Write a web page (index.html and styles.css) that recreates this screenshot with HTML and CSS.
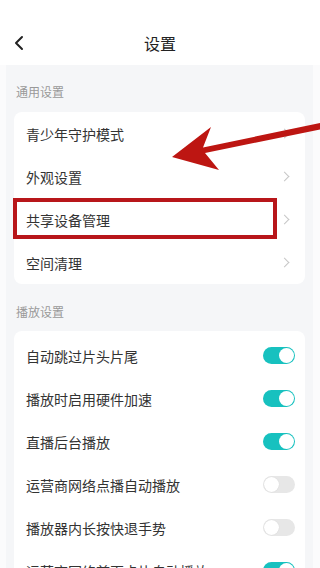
FILE: index.html
```html
<!DOCTYPE html>
<html lang="zh">
<head>
<meta charset="utf-8">
<link rel="stylesheet" href="styles.css">
</head>
<body>
<div class="app">
  <header class="header">
    <svg class="back" width="12" height="16" viewBox="0 0 12 16"><polyline points="8,2 2,8 8,14" fill="none" stroke="#222" stroke-width="2" stroke-linecap="round" stroke-linejoin="round"/></svg>
    <div class="title">设置</div>
  </header>
  <main class="main">
    <div class="label">通用设置</div>
    <div class="card">
      <div class="row"><span>青少年守护模式</span><span class="chev"></span></div>
      <div class="row"><span>外观设置</span><span class="chev"></span></div>
      <div class="row"><span>共享设备管理</span><span class="chev"></span></div>
      <div class="row"><span>空间清理</span><span class="chev"></span></div>
    </div>
    <div class="label second">播放设置</div>
    <div class="card card2">
      <div class="row"><span>自动跳过片头片尾</span><span class="tg on"></span></div>
      <div class="row"><span>播放时启用硬件加速</span><span class="tg on"></span></div>
      <div class="row"><span>直播后台播放</span><span class="tg on"></span></div>
      <div class="row"><span>运营商网络点播自动播放</span><span class="tg"></span></div>
      <div class="row"><span>播放器内长按快退手势</span><span class="tg"></span></div>
      <div class="row"><span>运营商网络首页卡片自动播放</span><span class="tg on"></span></div>
    </div>
  </main>
  <div class="mark-box"></div>
  <svg class="mark-arrow" width="320" height="568" viewBox="0 0 320 568">
    <polygon points="172,157 211,127 203,147.5 320,123 320,129.5 205,153 219,170" fill="#bd1612"/>
  </svg>
</div>
</body>
</html>
```
FILE: styles.css
```css
* { box-sizing: border-box; }
html, body { margin: 0; padding: 0; }
body {
  width: 320px;
  height: 568px;
  overflow: hidden;
  background: #fbfbfc;
  font-family: "Noto Sans CJK SC", "Noto Sans", sans-serif;
}
.app { position: relative; width: 320px; height: 568px; overflow: hidden; }
.header {
  height: 65px;
  background: #fff;
  display: flex;
  align-items: flex-start;
  justify-content: center;
  padding-top: 30px;
  position: relative;
}
.back { position: absolute; left: 14px; top: 35px; }
.title { font-size: 16px; line-height: 26px; color: #222; }
.main {
  margin: 0 7px 0 6px;
  padding: 19px 8px 20px;
  background: #f5f6f8;
  min-height: 503px;
}
.label {
  font-size: 12px;
  line-height: 16px;
  color: #999;
  padding-left: 2px;
  margin-bottom: 12px;
}
.label.second { margin-top: 20px; margin-bottom: 11px; }
.card {
  background: #fff;
  border-radius: 8px;
  padding: 0;
}
.card2 { padding-top: 3px; }
.row {
  height: 43px;
  display: flex;
  align-items: center;
  justify-content: space-between;
  padding: 0 10px 0 12px;
  font-size: 14px;
  color: #333;
}
.chev {
  width: 7px;
  height: 7px;
  border-top: 1.3px solid #c6c6c6;
  border-right: 1.3px solid #c6c6c6;
  transform: rotate(45deg);
  margin-right: 7px;
}
.tg {
  width: 32px;
  height: 17px;
  border-radius: 9px;
  background: #e7e7e7;
  position: relative;
}
.tg::after {
  content: "";
  position: absolute;
  top: 1px;
  left: 1px;
  width: 15px;
  height: 15px;
  border-radius: 50%;
  background: #fff;
  box-shadow: 0 0 1px rgba(0,0,0,0.15);
}
.tg.on { background: #17c1bf; }
.tg.on::after { left: 16px; box-shadow: none; }
.mark-box {
  position: absolute;
  left: 13px;
  top: 198px;
  width: 264px;
  height: 41px;
  border: 4.5px solid #b8161a;
}
.mark-arrow { position: absolute; left: 0; top: 0; }
```
